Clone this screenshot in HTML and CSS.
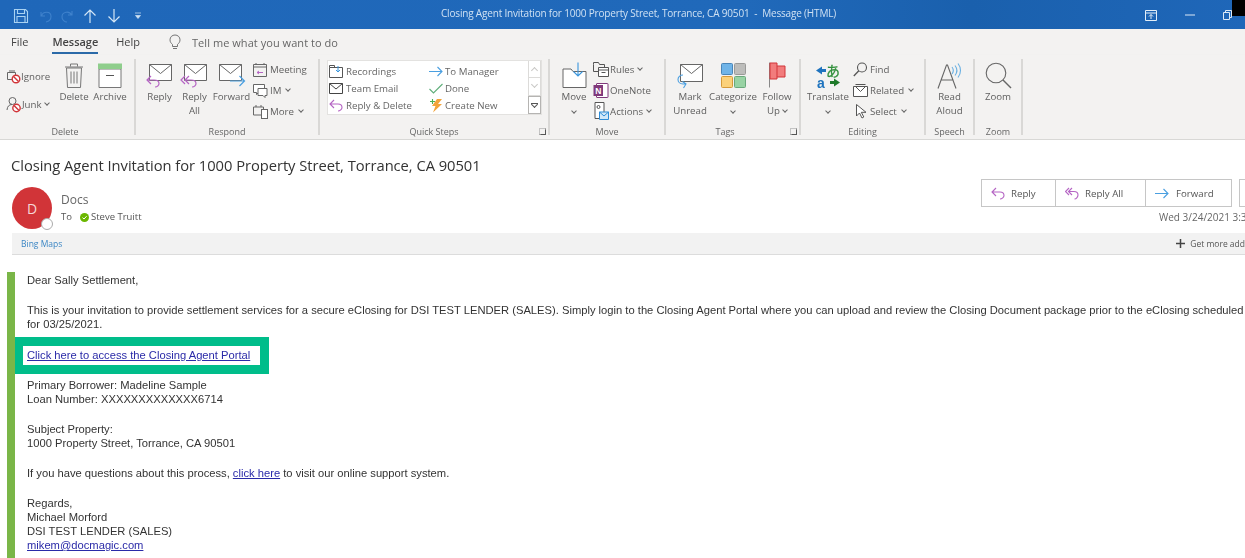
FILE: index.html
```html
<!DOCTYPE html>
<html lang="en">
<head>
<meta charset="utf-8">
<title>Closing Agent Invitation</title>
<link rel="stylesheet" href="styles.css">
</head>
<body>
<div class="app">
  <header class="titlebar">
    <div class="qat">
      <svg class="q-save" width="16" height="16" viewBox="0 0 16 16"><path d="M1.500 1.500h11l2 2v11h-13z M4.500 1.500v4h7v-4 M4 14.500v-6h8v6" fill="none" stroke="#a9d2f2" stroke-width="1.100"/></svg>
      <svg class="q-undo" width="16" height="16" viewBox="0 0 16 16"><path d="M3 4v4h4 M3.500 8C5 3 13 3 13 8.500c0 3-2.500 5-5 5.500" fill="none" stroke="#3f82cc" stroke-width="1.100"/></svg>
      <svg class="q-redo" width="16" height="16" viewBox="0 0 16 16"><path d="M13 3v4h-4 M12.500 7C10.500 2.500 3 3.500 3 9c0 3 2.500 5 5 5" fill="none" stroke="#3f82cc" stroke-width="1.100"/></svg>
      <svg class="q-up" width="14" height="16" viewBox="0 0 14 16"><path d="M7 15V2M1.500 7.500 7 2l5.500 5.500" fill="none" stroke="#d4e6f6" stroke-width="1.200"/></svg>
      <svg class="q-down" width="14" height="16" viewBox="0 0 14 16"><path d="M7 1v13M1.500 8.500 7 14l5.500-5.500" fill="none" stroke="#d4e6f6" stroke-width="1.200"/></svg>
      <svg class="q-more" width="8" height="8" viewBox="0 0 8 8"><path d="M1 1h6M1.500 3.500h5L4 6.500z" fill="#cfe2f4" stroke="#cfe2f4" stroke-width=".7"/></svg>
    </div>
    <div class="doc-title">Closing Agent Invitation for 1000 Property Street, Torrance, CA 90501&nbsp; - &nbsp;Message (HTML)</div>
    <div class="winbtns">
      <svg width="12" height="11" viewBox="0 0 12 11"><path d="M.5.500h11v10H.5zM.5 3h11M6 9V4.500M4 6.500l2-2 2 2" fill="none" stroke="#e3eef8"/></svg>
      <svg class="w-min" width="10" height="2" viewBox="0 0 10 2"><path d="M0 1h10" stroke="#dce9f6"/></svg>
      <svg class="w-res" width="9" height="10" viewBox="0 0 9 10"><path d="M.5 2.500h6v7h-6zM2.500 2.500v-2h6v7h-2" fill="none" stroke="#dce9f6"/></svg>
      <span class="w-black"></span>
    </div>
  </header>

  <nav class="tabs">
    <span class="tab tab-file">File</span>
    <span class="tab tab-active">Message</span>
    <span class="tab">Help</span>
    <svg class="bulb" width="12" height="16" viewBox="0 0 12 16"><path d="M3.500 10.500C2 9 1 8 1 5.800 1 3 3.200 1 6 1s5 2 5 4.800C11 8 10 9 8.500 10.500v2h-5zM4 14.500h4" fill="none" stroke="#666" stroke-width=".9"/></svg>
    <span class="tellme">Tell me what you want to do</span>
  </nav>

  <section class="ribbon">
    <div class="group g-delete">
      <div class="group-body">
        <div class="stack s-delete">
          <div class="small"><svg width="15" height="15" viewBox="0 0 15 15"><path d="M1.500 3.500h8v7h-8zM3 2h6" fill="none" stroke="#666"/><circle cx="10" cy="10" r="3.800" fill="#fff" stroke="#d13438" stroke-width="1.400"/><path d="M7.500 7.500l5 5" stroke="#d13438" stroke-width="1.400"/></svg>Ignore</div>
          <div class="small"><svg width="16" height="17" viewBox="0 0 16 17"><circle cx="6.500" cy="5" r="3.500" fill="none" stroke="#666"/><path d="M1 14c.3-3.500 2-5.500 5-5.500" fill="none" stroke="#666"/><circle cx="10.500" cy="12" r="3.700" fill="#fff" stroke="#d13438" stroke-width="1.400"/><path d="M8 9.500l5 5" stroke="#d13438" stroke-width="1.400"/></svg>Junk<i class="chev"></i></div>
        </div>
        <div class="big b-trash">
          <svg width="20" height="26" viewBox="0 0 20 26"><path d="M2.500 5.500h15l-1 19.500h-13zM1 4.500h18M6.500 4V1.500h7V4M7 9v12M10 9v12M13 9v12" fill="none" stroke="#777" stroke-width="1"/></svg>
          <span>Delete</span>
        </div>
        <div class="big b-arch">
          <svg width="24" height="26" viewBox="0 0 24 26"><path d="M1 6.500h22V25H1z" fill="#fff" stroke="#777"/><path d="M0 1h24v5.500H0z" fill="#8fce8c"/><path d="M8 13h8" stroke="#555"/></svg>
          <span>Archive</span>
        </div>
      </div>
      <div class="group-label">Delete</div>
    </div>

    <div class="group g-respond">
      <div class="group-body">
        <div class="big b-reply">
          <svg width="27" height="25" viewBox="0 0 27 25"><path d="M3.500 1.500h22v16h-22z" fill="#fff" stroke="#666"/><path d="M3.500 1.500l11 9 11-9" fill="none" stroke="#666"/><path d="M5 13 1 17l4 4M1 17h7c4 0 5 2 5 3.500S11.500 24 9 24" fill="none" stroke="#b565c4" stroke-width="1.200"/></svg>
          <span>Reply</span>
        </div>
        <div class="big b-replyall">
          <svg width="27" height="25" viewBox="0 0 27 25"><path d="M3.500 1.500h22v16h-22z" fill="#fff" stroke="#666"/><path d="M3.500 1.500l11 9 11-9" fill="none" stroke="#666"/><path d="M4 13 0 17l4 4M8 13 4 17l4 4M4 17h6c4 0 5 2 5 3.500S13.500 24 11 24" fill="none" stroke="#b565c4" stroke-width="1.200"/></svg>
          <span>Reply<br>All</span>
        </div>
        <div class="big b-forward">
          <svg width="27" height="25" viewBox="0 0 27 25"><path d="M1.500 1.500h22v16h-22z" fill="#fff" stroke="#666"/><path d="M1.500 1.500l11 9 11-9" fill="none" stroke="#666"/><path d="M12 18h14M21.500 13l5 5-5 5" fill="none" stroke="#4a9fe0" stroke-width="1.200"/></svg>
          <span>Forward</span>
        </div>
        <div class="stack s-respond">
          <div class="small"><svg width="15" height="15" viewBox="0 0 15 15"><path d="M.5 2.500h13v12H.5zM.5 5h13M3 1v2M11 1v2" fill="none" stroke="#666"/><path d="M6 9l-2 1.500L6 12M4 10.500h6" fill="none" stroke="#b565c4"/></svg>Meeting</div>
          <div class="small"><svg width="15" height="15" viewBox="0 0 15 15"><path d="M.5 1.500h11v8h-6l-2 2v-2h-3z" fill="#fff" stroke="#666"/><path d="M5 5.500h9v7h-2v2l-2-2H5z" fill="#fff" stroke="#666"/></svg>IM<i class="chev"></i></div>
          <div class="small"><svg width="15" height="15" viewBox="0 0 15 15"><path d="M.5 3h10v8H.5zM3 1v2M8 1v2" fill="none" stroke="#666"/><rect x="8.500" y="5.500" width="6" height="9" fill="#fff" stroke="#666"/></svg>More<i class="chev"></i></div>
        </div>
      </div>
      <div class="group-label">Respond</div>
    </div>

    <div class="group g-quick">
      <div class="group-body">
        <div class="quick-box">
          <div class="quick-col q1">
            <div class="qrow"><svg width="14" height="13" viewBox="0 0 14 13"><path d="M.5 2.500h13v10H.5z" fill="#fff" stroke="#555"/><path d="M.5 2.500V.5h5v2" fill="none" stroke="#555"/><path d="M9 1v6M7 5l2 2 2-2" fill="none" stroke="#3a96dd"/></svg>Recordings</div>
            <div class="qrow"><svg width="14" height="11" viewBox="0 0 14 11"><path d="M.5.500h13v10H.5zM.5.500 7 6l6.500-5.500" fill="#fff" stroke="#444"/></svg>Team Email</div>
            <div class="qrow"><svg width="14" height="13" viewBox="0 0 14 13"><path d="M5 1 1 5l4 4M1 5h8c3 0 4 2 4 3.500S11 12 9 12" fill="none" stroke="#b565c4" stroke-width="1.100"/></svg>Reply &amp; Delete</div>
          </div>
          <div class="quick-col q2">
            <div class="qrow"><svg width="14" height="11" viewBox="0 0 14 11"><path d="M0 5.500h13M8.500 1 13 5.500 8.500 10" fill="none" stroke="#4a9fe0" stroke-width="1.100"/></svg>To Manager</div>
            <div class="qrow"><svg width="14" height="11" viewBox="0 0 14 11"><path d="M.5 6l4 4 9-9" fill="none" stroke="#5fae7a" stroke-width="1.100"/></svg>Done</div>
            <div class="qrow"><svg width="14" height="15" viewBox="0 0 14 15"><path d="M8 1h5L9 6h4L4 14.500 6.500 8H3z" fill="#f2a33a"/><path d="M1 3.500h5M3.500 1v5" stroke="#4caf50" stroke-width="1.100"/></svg>Create New</div>
          </div>
          <div class="q-scroll">
            <span class="qs"><i class="qs-up"></i></span>
            <span class="qs"><i class="qs-down"></i></span>
            <span class="qs qs-more"><i class="qs-line"></i><i class="qs-down dark"></i></span>
          </div>
        </div>
      </div>
      <div class="group-label">Quick Steps<i class="launcher"></i></div>
    </div>

    <div class="group g-move">
      <div class="group-body">
        <div class="big b-move">
          <svg width="25" height="26" viewBox="0 0 25 26"><path d="M1 6.500h8l2 2.500h13v16H1z" fill="#fff" stroke="#666"/><path d="M16 0v13M11.500 9l4.500 4.500L20.500 9" fill="none" stroke="#3a96dd" stroke-width="1.100"/></svg>
          <span>Move</span><i class="chev solo"></i>
        </div>
        <div class="stack s-move">
          <div class="small"><svg width="16" height="15" viewBox="0 0 16 15"><path d="M.5 2.500V.5h5l1 2h5v3M.5 2.500v7h5" fill="none" stroke="#555"/><path d="M5.500 5.500h10v9h-10zM5.500 8h10M8.500 10.500h4" fill="#fff" stroke="#555"/></svg>Rules<i class="chev"></i></div>
          <div class="small"><svg width="15" height="15" viewBox="0 0 15 15"><rect x="3" y=".5" width="11.500" height="14" rx=".5" fill="#fff" stroke="#80397b"/><rect x="0" y="2" width="9.500" height="11" fill="#80397b"/><text x="1.700" y="10.800" class="n-letter">N</text></svg>OneNote</div>
          <div class="small"><svg width="15" height="18" viewBox="0 0 15 18"><path d="M1.500.5h9v16h-9z" fill="#fff" stroke="#555"/><circle cx="5" cy="5" r="1.500" fill="none" stroke="#555"/><path d="M6 10h9v7.500H6z" fill="#d2e8f8" stroke="#2f8cd6"/><path d="M6 10l4.500 4 4.500-4" fill="none" stroke="#2f8cd6"/></svg>Actions<i class="chev"></i></div>
        </div>
      </div>
      <div class="group-label">Move</div>
    </div>

    <div class="group g-tags">
      <div class="group-body">
        <div class="big b-mark">
          <svg width="27" height="25" viewBox="0 0 27 25"><path d="M3.500 1.500h22v17h-22z" fill="#fff" stroke="#666"/><path d="M3.500 1.500l11 9 11-9" fill="none" stroke="#666"/><path d="M6 12c-3 0-5 2-5 4.500S3 21 6 21h3M6.500 25 9 21l-3.500-2.500" fill="none" stroke="#4a9fe0" stroke-width="1.100"/></svg>
          <span>Mark<br>Unread</span>
        </div>
        <div class="big b-cat">
          <svg width="25" height="25" viewBox="0 0 25 25"><rect x="0.500" y="0.500" width="11" height="11" rx="1" fill="#6fb4e8" stroke="#4a86b8"/><rect x="13.500" y="0.500" width="11" height="11" rx="1" fill="#bdbdbb" stroke="#9a9a98"/><rect x="0.500" y="13.500" width="11" height="11" rx="1" fill="#fbd17a" stroke="#d59a3a"/><rect x="13.500" y="13.500" width="11" height="11" rx="1" fill="#98d3a4" stroke="#6aa87c"/></svg>
          <span>Categorize</span><i class="chev solo"></i>
        </div>
        <div class="big b-follow">
          <svg width="18" height="26" viewBox="0 0 18 26"><path d="M1.500 0v25" stroke="#888"/><path d="M2 .5h7v3h8v11H9v2H2z" fill="#f27c7c" stroke="#d13438"/><path d="M9 3.500v11" stroke="#d13438"/></svg>
          <span>Follow<br>Up<i class="chev"></i></span>
        </div>
      </div>
      <div class="group-label label-tags">Tags<i class="launcher"></i></div>
    </div>

    <div class="group g-editing">
      <div class="group-body">
        <div class="big b-trans">
          <svg width="26" height="26" viewBox="0 0 26 26"><path d="M1 8l6-4v2.500h4v3H7V12z" fill="#1e73be"/><text x="11" y="13" class="t-a">あ</text><text x="2" y="25" class="t-b">a</text><path d="M25 20l-6 4v-2.500h-4v-3h4V16z" fill="#1f7a2a"/></svg>
          <span>Translate</span><i class="chev solo"></i>
        </div>
        <div class="stack s-edit">
          <div class="small"><svg width="15" height="15" viewBox="0 0 15 15"><circle cx="9" cy="5.500" r="4.500" fill="none" stroke="#555" stroke-width="1.100"/><path d="M5.800 8.700 .8 14" stroke="#555" stroke-width="1.300"/></svg>Find</div>
          <div class="small"><svg width="15" height="13" viewBox="0 0 15 13"><path d="M.5 2.500h14v10H.5z" fill="#fff" stroke="#555"/><path d="M2.500.5h10M3 3l4.500 4.500L12 3" fill="none" stroke="#555"/></svg>Related<i class="chev"></i></div>
          <div class="small"><svg width="15" height="15" viewBox="0 0 15 15"><path d="M3.500.5v11.500l3-3 2.500 5 1.800-1-2.500-4.700H13z" fill="#fff" stroke="#555"/></svg>Select<i class="chev"></i></div>
        </div>
      </div>
      <div class="group-label">Editing</div>
    </div>

    <div class="group g-speech">
      <div class="group-body center">
        <div class="big b-read">
          <svg width="26" height="27" viewBox="0 0 26 27"><path d="M1 26.500 9.500 3h1l8.500 23.500M4 18h12.500" fill="none" stroke="#666" stroke-width="1.100"/><path d="M15 5c1.500 2 1.500 5 0 7M18 3.500c2.300 3 2.300 7 0 10M21 1.500c3.300 4 3.300 10 0 14" fill="none" stroke="#6ab0e2" stroke-width="1.100"/></svg>
          <span>Read<br>Aloud</span>
        </div>
      </div>
      <div class="group-label">Speech</div>
    </div>

    <div class="group g-zoom">
      <div class="group-body center">
        <div class="big b-zoom">
          <svg width="27" height="27" viewBox="0 0 27 27"><circle cx="11" cy="11" r="9.800" fill="none" stroke="#666" stroke-width="1.100"/><path d="M18 18l8 8" stroke="#666" stroke-width="1.400"/></svg>
          <span>Zoom</span>
        </div>
      </div>
      <div class="group-label">Zoom</div>
    </div>
  </section>

  <main class="message">
    <h1 class="subject">Closing Agent Invitation for 1000 Property Street, Torrance, CA 90501</h1>
    <div class="head-row">
      <div class="avatar">D<span class="presence"></span></div>
      <div class="who">
        <div class="from">Docs</div>
        <div class="to">To <svg class="chk" width="9" height="9" viewBox="0 0 9 9"><circle cx="4.500" cy="4.500" r="4.500" fill="#6bb700"/><path d="M2.500 4.600l1.500 1.400 2.600-2.800" fill="none" stroke="#fff"/></svg> Steve Truitt</div>
      </div>
      <div class="actions">
        <div class="btn-row">
          <span class="btn b1"><svg width="14" height="13" viewBox="0 0 14 13"><path d="M5 1 1 5l4 4M1 5h8c3 0 4 2 4 3.500S11 12 9 12" fill="none" stroke="#b565c4" stroke-width="1.100"/></svg>Reply</span>
          <span class="btn b2"><svg width="14" height="13" viewBox="0 0 14 13"><path d="M4 1 0.500 4.500 4 8M7 1 3.500 4.500 7 8M4 4.500h5c3 0 4 2 4 3.500S11.500 12 9.500 12" fill="none" stroke="#b565c4" stroke-width="1.100"/></svg>Reply All</span>
          <span class="btn b3"><svg width="14" height="11" viewBox="0 0 14 11"><path d="M0 5.500h13M8.500 1 13 5.500 8.500 10" fill="none" stroke="#4a9fe0" stroke-width="1.100"/></svg>Forward</span>
          <span class="btn b4"></span>
        </div>
        <div class="date">Wed 3/24/2021 3:3</div>
      </div>
    </div>
    <div class="addins">
      <span class="bing">Bing Maps</span>
      <span class="more-addins"><svg width="9" height="9" viewBox="0 0 9 9"><path d="M4.500 0v9M0 4.500h9" stroke="#444" stroke-width="1.500"/></svg>Get more add</span>
    </div>
    <article class="mail">
      <p>Dear Sally Settlement,</p>
      <p>This is your invitation to provide settlement services for a secure eClosing for DSI TEST LENDER (SALES). Simply login to the Closing Agent Portal where you can upload and review the Closing Document package prior to the eClosing scheduled<br>for 03/25/2021.</p>
      <p class="callout"><a href="#">Click here to access the Closing Agent Portal</a></p>
      <p>Primary Borrower: Madeline Sample<br>Loan Number: XXXXXXXXXXXXX6714</p>
      <p>Subject Property:<br>1000 Property Street, Torrance, CA 90501</p>
      <p>If you have questions about this process, <a href="#">click here</a> to visit our online support system.</p>
      <p>Regards,<br>Michael Morford<br>DSI TEST LENDER (SALES)<br><a href="#">mikem@docmagic.com</a></p>
    </article>
  </main>
</div>
</body>
</html>
```
FILE: styles.css
```css
* { box-sizing: border-box; }
html, body { margin: 0; height: 100%; overflow: hidden; background: #fff; }
body { font-family: "Open Sans", "Noto Sans", sans-serif; color: #444; }
.app { width: 1245px; height: 558px; overflow: hidden; display: flex; flex-direction: column; filter: blur(.35px); }

.titlebar { height: 29px; flex: none; display: flex; align-items: center; position: relative; background: linear-gradient(90deg, #1f67b9 0%, #2069ba 60%, #1a60ad 78%, #1f67b9 100%); }
.qat { display: flex; align-items: center; padding-left: 13px; padding-top: 2px; }
.q-undo { margin-left: 9px; }
.q-redo { margin-left: 5px; }
.q-up { margin-left: 8px; }
.q-down { margin-left: 10px; }
.q-more { margin-left: 13px; }
.doc-title { position: absolute; left: 441px; top: 6px; font-size: 10px; line-height: 15px; color: #cfe1f3; white-space: nowrap; letter-spacing: -.18px; }
.winbtns { margin-left: auto; display: flex; align-items: center; height: 100%; padding-top: 1px; }
.w-min { margin-left: 28px; }
.w-res { margin-left: 28px; }
.w-black { width: 13px; height: 16px; background: #000; align-self: flex-start; margin-top: -1px; }

.tabs { height: 26px; flex: none; background: #f3f2f1; display: flex; align-items: center; font-size: 11px; color: #444; padding-left: 11px; }
.tab { margin-right: 18px; line-height: 16px; position: relative; }
.tab-file { margin-right: 24px; }
.tab-active { font-weight: 600; color: #444; letter-spacing: -.03px; }
.tab-active::after { content: ""; position: absolute; left: 0; right: 0; bottom: -4px; height: 2px; background: #2b6aa8; }
.bulb { margin-left: 11px; margin-right: 11px; }
.tellme { color: #666; letter-spacing: .05px; }

.ribbon { height: 85px; flex: none; background: #f3f2f1; border-bottom: 1px solid #d8d8d6; padding-top: 4px; display: flex; align-items: flex-start; box-shadow: 0 1px 2px rgba(0,0,0,.08); font-size: 9.700px; color: #606060; }
.group { display: flex; flex-direction: column; border-right: 2px solid #d9d8d6; height: 76px; flex: none; position: relative; }
.group-body { height: 65px; flex: none; display: flex; align-items: flex-start; }
.group-body.center { justify-content: center; }
.group-label { height: 16px; flex: none; line-height: 16px; text-align: center; font-size: 9px; color: #666; }
.g-delete { width: 136px; }
.g-delete .group-label { padding-right: 4px; }
.g-respond { width: 184px; }
.g-quick { width: 230px; }
.g-move { width: 116px; }
.g-tags { width: 135px; }
.label-tags { padding-right: 15px; }
.g-editing { width: 125px; }
.g-speech { width: 49px; }
.g-zoom { width: 48px; }

.big { display: flex; flex-direction: column; align-items: center; text-align: center; line-height: 14px; flex: none; padding-top: 3px; }
.big svg { height: 27px; margin-bottom: 1px; display: block; overflow: visible; }
.big span { white-space: nowrap; }
.stack { display: flex; flex-direction: column; gap: 5px; flex: none; }
.small { display: flex; align-items: center; height: 16px; white-space: nowrap; gap: 2px; }
.small svg { flex: none; }
.chev { display: inline-block; width: 4px; height: 4px; border-right: 1px solid #666; border-bottom: 1px solid #666; transform: rotate(45deg); margin: -3px 0 0 3px; vertical-align: middle; }
.chev.solo { display: block; margin: 5px 0 0; }

.s-delete { margin: 9px 0 0 6px; gap: 12px; width: 54px; }
.s-delete .small { gap: 0; }
.b-trash { width: 30px; margin-left: -1px; }
.b-arch { width: 40px; margin-left: 1px; }

.b-reply { width: 35px; margin-left: 6px; }
.b-replyall { width: 35px; }
.b-forward { width: 37px; margin-left: 1px; }
.s-respond { margin: 2px 0 0 3px; gap: 5px; }
.s-respond .small { gap: 2px; }

.quick-box { width: 215px; height: 55px; margin: 1px 0 0 7px; background: #fff; border: 1px solid #e3e2e0; display: flex; position: relative; }
.quick-col { display: flex; flex-direction: column; gap: 1px; padding-top: 2px; }
.q1 { width: 101px; padding-left: 1px; }
.q2 { width: 95px; }
.qrow { height: 16px; display: flex; align-items: center; gap: 3px; white-space: nowrap; color: #666; }
.qrow svg { flex: none; width: 14px; }
.q2 .qrow { gap: 2px; }
.q-scroll { width: 13px; margin-left: auto; display: flex; flex-direction: column; }
.qs { height: 18px; border: 1px solid #dcdbd9; border-top-width: 0; display: flex; flex-direction: column; align-items: center; justify-content: center; gap: 1px; }
.qs i { display: block; }
.qs-up { width: 5px; height: 5px; border-left: 1px solid #c9c8c6; border-top: 1px solid #c9c8c6; transform: rotate(45deg); margin-top: 3px; }
.qs-down { width: 5px; height: 5px; border-right: 1px solid #c9c8c6; border-bottom: 1px solid #c9c8c6; transform: rotate(45deg); margin-top: -3px; }
.qs-down.dark { border-color: #555; }
.qs-line { width: 7px; height: 1px; background: #555; }
.qs-more { height: 19px; border-color: #b5b4b2; border-top-width: 1px; }
.launcher { position: absolute; right: 2px; bottom: 0; width: 7px; height: 7px; border: 1px solid #8a8a8a; border-top-color: #c4c4c4; border-left-color: #c4c4c4; }
.launcher::after { content: ""; display: block; width: 4px; height: 4px; margin: 1px 0 0 1px; border-right: 1px solid #555; border-bottom: 1px solid #555; }

.b-move { width: 34px; margin: 0 0 0 7px; }
.s-move { margin: 2px 0 0 2px; gap: 5px; }
.s-move .small { gap: 1px; }
.s-move svg { width: 16px; }
.n-letter { font: 700 8.500px "Liberation Sans", sans-serif; fill: #fff; }

.b-mark { width: 36px; margin: 0 0 0 6px; }
.b-cat { width: 50px; }
.b-follow { width: 34px; margin: 0 0 0 2px; }
.b-follow .chev { margin-left: 3px; }

.b-trans { width: 40px; margin: 0 0 0 7px; }
.b-trans svg { width: 26px; }
.t-a { font: 400 14px "Noto Sans CJK JP", sans-serif; fill: #2f8f3a; stroke: #2f8f3a; stroke-width: .3px; }
.t-b { font: 700 14px "Liberation Sans", sans-serif; fill: #1e73be; }
.s-edit { margin: 2px 0 0 5px; gap: 5px; }
.s-edit .small { gap: 2px; }

.b-read { width: 40px; }
.b-zoom { width: 40px; }

.message { flex: 1; min-height: 0; background: #fff; display: flex; flex-direction: column; }
.subject { margin: 15px 0 0 11px; font-size: 14.720px; line-height: 20px; font-weight: 400; color: #333; letter-spacing: -.04px; white-space: nowrap; }
.head-row { height: 58px; flex: none; margin-left: 12px; display: flex; align-items: flex-start; padding-top: 12px; }
.avatar { width: 40px; height: 42px; flex: none; background: #d13438; border-radius: 50%; color: #f6d7d7; text-align: center; font-size: 14px; line-height: 43px; position: relative; }
.presence { position: absolute; right: -1px; bottom: -1px; width: 12px; height: 12px; border-radius: 50%; background: #fff; border: 1px solid #aaa; }
.who { margin-left: 9px; }
.from { font-size: 12px; line-height: 17px; color: #666; margin-top: 4px; }
.to { font-size: 9.500px; line-height: 14px; color: #555; margin-top: 2px; display: flex; align-items: center; white-space: nowrap; }
.chk { margin: 0 2px 0 8px; }
.actions { margin-left: auto; display: flex; flex-direction: column; align-items: flex-end; flex: none; width: 264px; overflow: hidden; margin-top: -8px; }
.btn-row { display: flex; width: 264px; height: 28px; flex: none; }
.btn { height: 28px; flex: none; border: 1px solid #c6c6c6; border-left-width: 0; display: flex; align-items: center; font-size: 9.700px; color: #555; background: #fff; gap: 6px; }
.b1 { width: 75px; border-left-width: 1px; padding-left: 9px; }
.b2 { width: 90px; padding-left: 9px; }
.b3 { width: 86px; padding-left: 9px; gap: 7px; }
.b4 { width: 12px; margin-left: 7px; border-left-width: 1px; }
.date { font-size: 10px; line-height: 14px; color: #666; margin-top: 3px; width: 264px; padding-left: 178px; white-space: nowrap; }
.addins { height: 22px; margin-left: 12px; background: #f2f2f2; border-bottom: 1px solid #dcdcdc; display: flex; align-items: center; justify-content: space-between; font-size: 8.500px; flex: none; overflow: hidden; }
.bing { color: #3b86c4; margin-left: 9px; }
.more-addins { color: #555; display: flex; align-items: center; gap: 5px; white-space: nowrap; }

.mail { margin: 17px 0 0 7px; border-left: 8px solid #7ab648; padding: 1px 0 0 12px; font-family: "Liberation Sans", Arial, sans-serif; font-size: 11.200px; line-height: 14px; color: #333; flex: 1; white-space: nowrap; }
.mail p { margin: 0 0 16px; }
.mail a { color: #2a2aa8; }
.mail .callout { width: 254px; height: 37px; margin: -10px 0 4px -12px; padding: 0 4px; line-height: 19px; background: #fff; border: solid #00bd8a; border-width: 9px 9px 9px 8px; }
```
